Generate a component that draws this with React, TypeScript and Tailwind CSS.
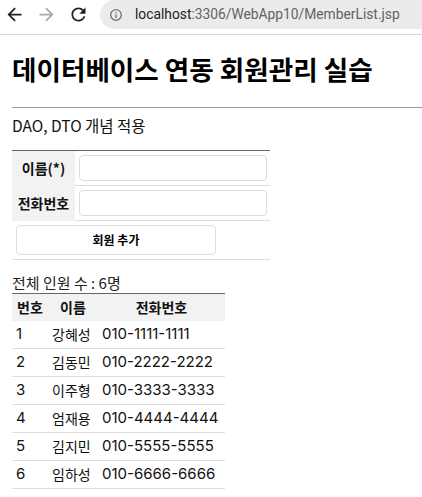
import React from "react";

const members = [
  { no: 1, name: "강혜성", tel: "010-1111-1111" },
  { no: 2, name: "김동민", tel: "010-2222-2222" },
  { no: 3, name: "이주형", tel: "010-3333-3333" },
  { no: 4, name: "엄재용", tel: "010-4444-4444" },
  { no: 5, name: "김지민", tel: "010-5555-5555" },
  { no: 6, name: "임하성", tel: "010-6666-6666" },
];

function BrowserBar() {
  return (
    <div className="flex h-[35px] items-start border-b border-[#d6d6d6] bg-white">
      <div className="flex h-[29px] items-center gap-[11px] pl-[4px]">
        <svg width="21" height="21" viewBox="0 0 24 24" fill="#202124">
          <path d="M20 11H7.83l5.59-5.59L12 4l-8 8 8 8 1.41-1.41L7.83 13H20v-2z" />
        </svg>
        <svg width="21" height="21" viewBox="0 0 24 24" fill="#a8a8a8">
          <path d="M4 11h12.17l-5.59-5.59L12 4l8 8-8 8-1.41-1.41L16.17 13H4v-2z" />
        </svg>
        <svg width="21" height="21" viewBox="0 0 24 24" fill="#202124">
          <path d="M17.65 6.35C16.2 4.9 14.21 4 12 4c-4.42 0-7.99 3.58-7.99 8s3.57 8 7.99 8c3.73 0 6.84-2.55 7.730-6h-2.08c-.82 2.33-3.04 4-5.65 4-3.31 0-6-2.69-6-6s2.69-6 6-6c1.66 0 3.14.69 4.22 1.78L13 11h7V4l-2.35 2.35z" />
        </svg>
      </div>
      <div className="ml-[11px] flex h-[29px] flex-1 items-center rounded-l-full bg-[#ebebeb] pl-[9px]">
        <svg width="14" height="14" viewBox="0 0 24 24" fill="#5f6368">
          <path d="M11 7h2v2h-2zm0 4h2v6h-2zm1-9C6.48 2 2 6.48 2 12s4.48 10 10 10 10-4.48 10-10S17.52 2 12 2zm0 18c-4.41 0-8-3.59-8-8s3.59-8 8-8 8 3.59 8 8-3.59 8-8 8z" />
        </svg>
        <span className="ml-[12px] whitespace-nowrap font-['Roboto',sans-serif] text-[13.8px] text-[#5f6368]">
          <span className="text-[#202124]">localhost</span>:3306/WebApp10/MemberList.jsp
        </span>
      </div>
    </div>
  );
}

export default function App() {
  return (
    <div className="min-h-[497px] bg-white font-['Noto_Sans_CJK_KR',sans-serif] text-[#111]">
      <BrowserBar />
      <div className="pl-3">
        <h1 className="mt-[15px] text-[26.6px] font-bold leading-[38px] text-black">
          데이터베이스 연동 회원관리 실습
        </h1>
        <div className="mt-[19px] h-px bg-[#9a9a9a]" />
        <p className="mt-[6px] text-[15.5px] leading-[22px]">DAO, DTO 개념 적용</p>

        <table className="mt-[14px] w-[258px] border-collapse border-t border-[#666]">
          <tbody>
            <tr>
              <th className="h-[35px] w-[63px] bg-[#f2f2f2] p-0 text-center text-[14px] font-bold">
                이름(*)
              </th>
              <td className="border-b border-[#ddd] py-0 pl-[4px] pr-[3px]">
                <input
                  type="text"
                  className="block h-[26px] w-[188px] rounded-[4px] border border-[#dcdcdc] bg-white"
                />
              </td>
            </tr>
            <tr>
              <th className="h-[35px] bg-[#f2f2f2] p-0 text-center text-[14px] font-bold">
                전화번호
              </th>
              <td className="border-b border-[#ddd] py-0 pl-[4px] pr-[3px]">
                <input
                  type="text"
                  className="block h-[26px] w-[188px] rounded-[4px] border border-[#dcdcdc] bg-white"
                />
              </td>
            </tr>
            <tr>
              <td colSpan={2} className="h-[39px] border-b border-[#ddd] py-0 pl-[4px]">
                <button
                  type="button"
                  className="block h-[30px] w-[200px] rounded-[4px] border border-[#dcdcdc] bg-white text-[12px] font-bold text-black"
                >
                  회원 추가
                </button>
              </td>
            </tr>
          </tbody>
        </table>

        <p className="mt-[12px] text-[15px] leading-[21px] text-[#222]">전체 인원 수 : 6명</p>

        <table className="w-[213px] table-fixed border-collapse border-t border-[#666] text-[14px]">
          <colgroup>
            <col className="w-[36px]" />
            <col className="w-[50px]" />
            <col className="w-[127px]" />
          </colgroup>
          <thead>
            <tr className="h-[27px] bg-[#f2f2f2]">
              <th className="p-0 text-center font-bold">번호</th>
              <th className="p-0 text-center font-bold">이름</th>
              <th className="p-0 text-center font-bold">전화번호</th>
            </tr>
          </thead>
          <tbody className="font-['Inter','Noto_Sans_CJK_KR',sans-serif] text-[15px]">
            {members.map((m) => (
              <tr key={m.no} className="h-[28px] border-b border-[#ddd]">
                <td className="py-0 pl-[4px]">{m.no}</td>
                <td className="py-0 pl-[4px] text-[14px]">{m.name}</td>
                <td className="py-0 pl-[4px]">{m.tel}</td>
              </tr>
            ))}
          </tbody>
        </table>
      </div>
    </div>
  );
}
